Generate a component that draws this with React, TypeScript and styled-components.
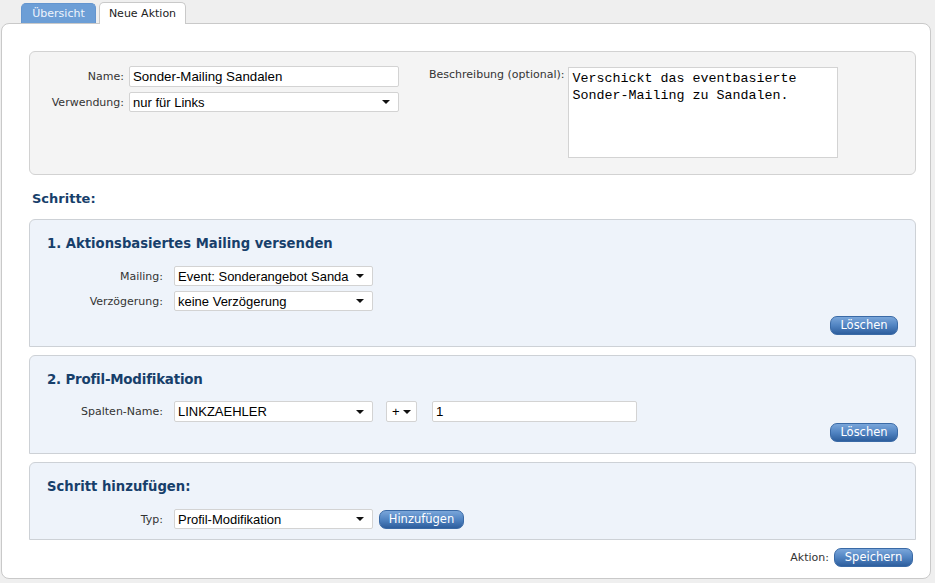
import React from "react";
import styled, { createGlobalStyle } from "styled-components";

const GlobalStyle = createGlobalStyle`
  * {
    margin: 0;
    padding: 0;
    box-sizing: border-box;
  }
  body {
    background: #efefef;
    font-family: "DejaVu Sans", sans-serif;
    font-size: 11px;
    color: #333;
  }
`;

const Page = styled.div`
  padding: 2px 4px 5px 1px;
`;

const TabBar = styled.div`
  display: flex;
  align-items: flex-end;
  gap: 3px;
  margin-left: 20px;
  height: 21px;
`;

const Tab = styled.div<{ $active?: boolean }>`
  position: relative;
  z-index: 1;
  display: flex;
  align-items: center;
  justify-content: center;
  font-family: "DejaVu Sans", sans-serif;
  font-size: 11px;
  border-radius: 5px 5px 0 0;
  ${(p) =>
    p.$active
      ? `
    width: 87px;
    height: 22px;
    margin-bottom: -1px;
    padding-bottom: 1px;
    background: #fff;
    color: #222;
    border: 1px solid #c9c9c9;
    border-bottom: none;
  `
      : `
    width: 75px;
    height: 20px;
    background: #6c9ed6;
    color: #eef4fc;
    border: 1px solid #6395cf;
    border-bottom: none;
  `}
`;

const Panel = styled.div`
  background: #fff;
  border: 1px solid #c9c9c9;
  border-radius: 8px;
  padding: 27px 14px 11px 27px;
`;

const InfoBox = styled.div`
  display: flex;
  height: 124px;
  background: #f4f4f4;
  border: 1px solid #d2d2d2;
  border-radius: 6px;
  padding-top: 14px;
`;

const FieldGrid = styled.div<{ $labelWidth: number; $gap: number }>`
  display: grid;
  grid-template-columns: ${(p) => p.$labelWidth}px auto;
  column-gap: ${(p) => p.$gap}px;
  row-gap: 5px;
  align-content: start;
  align-items: center;
`;

const Label = styled.label<{ $top?: boolean }>`
  text-align: right;
  font-family: "DejaVu Sans", sans-serif;
  font-size: 11px;
  color: #333;
  white-space: nowrap;
  padding-top: ${(p) => (p.$top ? 2 : 0)}px;
`;

const TextInput = styled.div<{ $width: number; $height?: number; $ml?: number }>`
  width: ${(p) => p.$width}px;
  height: ${(p) => p.$height ?? 20}px;
  margin-left: ${(p) => p.$ml ?? 0}px;
  background: #fff;
  border: 1px solid #d3d3d3;
  border-radius: 2px;
  padding: 0 3px;
  display: flex;
  align-items: center;
  font-family: "Liberation Sans", Arial, sans-serif;
  font-size: 13.3px;
  color: #000;
  white-space: nowrap;
`;

const SelectBox = styled.div<{ $width: number; $height?: number; $small?: boolean }>`
  width: ${(p) => p.$width}px;
  height: ${(p) => p.$height ?? 20}px;
  background: #fff;
  border: 1px solid #d3d3d3;
  border-radius: 2px;
  padding: ${(p) => (p.$small ? "0 6px 0 5px" : "0 8px 0 3px")};
  display: flex;
  align-items: center;
  justify-content: space-between;
  gap: 3px;
  font-family: "Liberation Sans", Arial, sans-serif;
  font-size: 13px;
  color: #000;
`;

const SelectText = styled.span`
  white-space: nowrap;
`;

const Caret = styled.span`
  width: 0;
  height: 0;
  border-left: 4px solid transparent;
  border-right: 4px solid transparent;
  border-top: 4px solid #111;
  flex-shrink: 0;
`;

const DescGroup = styled.div`
  display: flex;
  gap: 4px;
  margin-left: 30px;
`;

const TextArea = styled.div`
  width: 270px;
  height: 91px;
  margin-top: 1px;
  background: #fff;
  border: 1px solid #d3d3d3;
  padding: 2px 3px;
  font-family: "Liberation Mono", "Courier New", monospace;
  font-size: 13.33px;
  line-height: 17px;
  color: #000;
  white-space: pre;
`;

const SectionTitle = styled.h2`
  font-family: "DejaVu Sans", Verdana, sans-serif;
  font-weight: bold;
  font-size: 13px;
  color: #173f6b;
  margin: 16px 0 0 3px;
  height: 28px;
`;

const Steps = styled.div`
  display: flex;
  flex-direction: column;
  gap: 8px;
`;

const StepBox = styled.div<{ $pb: number }>`
  background: #eef3fa;
  border: 1px solid #cdd1d6;
  border-radius: 6px 6px 0 0;
  padding: 15px 17px ${(p) => p.$pb}px 17px;
`;

const StepTitle = styled.h3<{ $narrow?: boolean }>`
  font-family: "DejaVu Sans", Verdana, sans-serif;
  font-weight: bold;
  font-size: ${(p) => (p.$narrow ? "13.4px" : "13.2px")};
  letter-spacing: ${(p) => (p.$narrow ? "-0.2px" : "0")};
  color: #173f6b;
  height: 17px;
  line-height: 17px;
  margin-bottom: ${(p) => (p.$narrow ? 13 : 14)}px;
`;

const Row = styled.div<{ $gap: number }>`
  display: flex;
  align-items: center;
  gap: ${(p) => p.$gap}px;
`;

const ButtonRow = styled.div<{ $mt: number }>`
  display: flex;
  justify-content: flex-end;
  margin-top: ${(p) => p.$mt}px;
`;

const Button = styled.button<{ $width: number }>`
  width: ${(p) => p.$width}px;
  height: 19px;
  border: 1px solid #3a6aa6;
  border-radius: 7px;
  background: linear-gradient(#7aa6da 0%, #5184c2 50%, #2d5e9d 100%);
  color: #fff;
  font-family: "DejaVu Sans", Tahoma, sans-serif;
  font-size: 11.5px;
  line-height: 17px;
  cursor: pointer;
`;

const Footer = styled.div`
  display: flex;
  justify-content: flex-end;
  align-items: center;
  gap: 5px;
  margin-top: 8px;
  padding-right: 3px;
`;

const Select = ({
  value,
  width,
  height,
  small,
}: {
  value: string;
  width: number;
  height?: number;
  small?: boolean;
}) => (
  <SelectBox $width={width} $height={height} $small={small}>
    <SelectText>{value}</SelectText>
    <Caret />
  </SelectBox>
);

const App = () => {
  return (
    <>
      <GlobalStyle />
      <Page>
        <TabBar>
          <Tab>Übersicht</Tab>
          <Tab $active>Neue Aktion</Tab>
        </TabBar>
        <Panel>
          <InfoBox>
            <FieldGrid $labelWidth={94} $gap={5}>
              <Label>Name:</Label>
              <TextInput $width={270} $height={21}>
                Sonder-Mailing Sandalen
              </TextInput>
              <Label>Verwendung:</Label>
              <Select value="nur für Links" width={270} />
            </FieldGrid>
            <DescGroup>
              <Label $top>Beschreibung (optional):</Label>
              <TextArea>{"Verschickt das eventbasierte\nSonder-Mailing zu Sandalen."}</TextArea>
            </DescGroup>
          </InfoBox>

          <SectionTitle>Schritte:</SectionTitle>

          <Steps>
            <StepBox $pb={11}>
              <StepTitle>1. Aktionsbasiertes Mailing versenden</StepTitle>
              <FieldGrid $labelWidth={116} $gap={11}>
                <Label>Mailing:</Label>
                <Select value="Event: Sonderangebot Sanda" width={199} />
                <Label>Verzögerung:</Label>
                <Select value="keine Verzögerung" width={199} />
              </FieldGrid>
              <ButtonRow $mt={5}>
                <Button $width={68}>Löschen</Button>
              </ButtonRow>
            </StepBox>

            <StepBox $pb={11}>
              <StepTitle $narrow>2. Profil-Modifikation</StepTitle>
              <FieldGrid $labelWidth={116} $gap={11}>
                <Label>Spalten-Name:</Label>
                <Row $gap={13}>
                  <Select value="LINKZAEHLER" width={199} height={21} />
                  <Select value="+" width={31} height={21} small />
                  <TextInput $width={205} $height={21} $ml={2}>
                    1
                  </TextInput>
                </Row>
              </FieldGrid>
              <ButtonRow $mt={1}>
                <Button $width={68}>Löschen</Button>
              </ButtonRow>
            </StepBox>

            <StepBox $pb={10}>
              <StepTitle>Schritt hinzufügen:</StepTitle>
              <FieldGrid $labelWidth={116} $gap={11}>
                <Label>Typ:</Label>
                <Row $gap={6}>
                  <Select value="Profil-Modifikation" width={199} />
                  <Button $width={85}>Hinzufügen</Button>
                </Row>
              </FieldGrid>
            </StepBox>
          </Steps>

          <Footer>
            <Label>Aktion:</Label>
            <Button $width={79}>Speichern</Button>
          </Footer>
        </Panel>
      </Page>
    </>
  );
};

export default App;
